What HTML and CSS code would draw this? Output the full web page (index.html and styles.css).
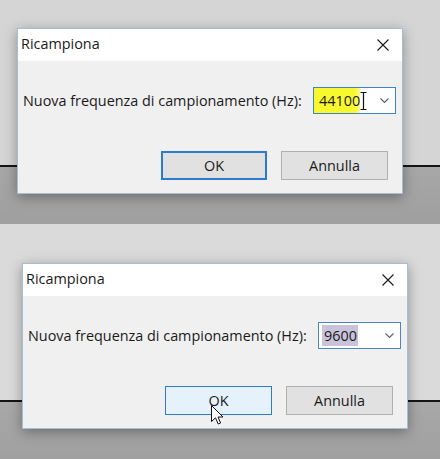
FILE: index.html
```html
<!DOCTYPE html>
<html lang="it">
<head>
<meta charset="utf-8">
<title>Ricampiona</title>
<link rel="stylesheet" href="styles.css">
</head>
<body>
<section class="panel panel-top">
  <div class="dialog">
    <div class="titlebar">
      <span class="title">Ricampiona</span>
      <svg class="close" width="12" height="12" viewBox="0 0 12 12"><path d="M0.5 0.5 L11.5 11.5 M11.5 0.5 L0.5 11.5" stroke="#1a1a1a" stroke-width="1.1" fill="none"/></svg>
    </div>
    <div class="content">
      <div class="row">
        <span class="label">Nuova frequenza di campionamento (Hz):</span>
        <div class="combo combo-focus">
          <span class="value hl-yellow">44100</span>
          <svg class="chev" width="9" height="5" viewBox="0 0 9 5"><path d="M0.5 0.5 L4.5 4.5 L8.5 0.5" stroke="#606060" stroke-width="1.1" fill="none"/></svg>
          <svg class="ibeam" width="7" height="18" viewBox="0 0 7 18"><path d="M0.5 0.5 H6.5 M3.5 0.5 V17.5 M0.5 17.5 H6.5" stroke="#111" stroke-width="1.2" fill="none"/></svg>
        </div>
      </div>
      <div class="buttons">
        <button class="btn btn-default">OK</button>
        <button class="btn">Annulla</button>
      </div>
    </div>
  </div>
</section>
<section class="panel panel-bottom">
  <div class="dialog">
    <div class="titlebar">
      <span class="title">Ricampiona</span>
      <svg class="close" width="12" height="12" viewBox="0 0 12 12"><path d="M0.5 0.5 L11.5 11.5 M11.5 0.5 L0.5 11.5" stroke="#1a1a1a" stroke-width="1.1" fill="none"/></svg>
    </div>
    <div class="content">
      <div class="row">
        <span class="label">Nuova frequenza di campionamento (Hz):</span>
        <div class="combo combo-plain">
          <span class="value hl-lilac">9600</span>
          <svg class="chev" width="9" height="5" viewBox="0 0 9 5"><path d="M0.5 0.5 L4.5 4.5 L8.5 0.5" stroke="#606060" stroke-width="1.1" fill="none"/></svg>
        </div>
      </div>
      <div class="buttons">
        <button class="btn btn-hover">OK
          <svg class="cursor" width="13" height="20" viewBox="0 0 13 20"><path d="M0.5 0.5 V16.5 L4.5 12.8 L7.2 19 L9.6 18 L7 12 H12 Z" fill="#fff" stroke="#111" stroke-width="1" stroke-linejoin="miter"/></svg>
        </button>
        <button class="btn">Annulla</button>
      </div>
    </div>
  </div>
</section>
</body>
</html>
```
FILE: styles.css
```css
* { box-sizing: border-box; }
html, body { margin: 0; padding: 0; }
body {
  width: 440px;
  height: 459px;
  overflow: hidden;
  background: #d8d8d8;
  font-family: "Open Sans", "Noto Sans", "DejaVu Sans", sans-serif;
  color: #1a1a1a;
}
.panel { display: block; }
.panel-top {
  height: 224px;
  padding: 28px 0 0 17px;
  background: linear-gradient(to bottom, #d5d5d5 0, #d5d5d5 165px, #141414 165px, #141414 167px, #a7a7a7 167px, #9f9f9f 224px);
}
.panel-bottom {
  height: 235px;
  padding: 39px 0 0 22px;
  background: linear-gradient(to bottom, #dadada 0, #dadada 176px, #141414 176px, #141414 178px, #a8a8a8 178px, #a0a0a0 235px);
}
.dialog {
  width: 386px;
  height: 166px;
  background: #f0f0f0;
  border: 1px solid #a8bcd4;
  box-shadow: 0 3px 12px rgba(0, 0, 0, 0.35);
  display: flex;
  flex-direction: column;
}
.titlebar {
  height: 32px;
  background: #fff;
  display: flex;
  align-items: center;
  justify-content: space-between;
  padding: 0 13px 0 3px;
}
.title { font-size: 14.4px; line-height: 1; padding-bottom: 1px; }
.close { display: block; }
.content { display: flex; flex-direction: column; }
.row {
  margin-top: 26px;
  height: 27px;
  display: flex;
  align-items: center;
  justify-content: space-between;
  padding: 0 6px 0 5px;
}
.label { font-size: 14.4px; }
.combo {
  position: relative;
  width: 83px;
  height: 27px;
  border: 1px solid #3c84cf;
  background: #fff;
  display: flex;
  align-items: center;
}
.combo-plain { border-color: #4a86c3; }
.value { font-size: 14.4px; line-height: 25px; }
.hl-yellow {
  background: linear-gradient(to right, #f8f82e 0, #f8f82e 40px, #fbfb8a 46px);
  width: 46px;
  height: 25px;
  padding-left: 5px;
}
.hl-lilac {
  background: #c9c3da;
  margin-left: 3px;
  height: 21px;
  line-height: 21px;
  padding: 0 2px 0 2px;
  width: 36px;
}
.chev { position: absolute; right: 6px; top: 10px; }
.ibeam { position: absolute; left: 46px; top: 4px; }
.buttons {
  margin-top: 37px;
  display: flex;
  justify-content: flex-end;
  gap: 14px;
  padding-right: 14px;
}
.btn {
  position: relative;
  width: 107px;
  height: 29px;
  font-family: inherit;
  font-size: 14.4px;
  color: #1a1a1a;
  background: #e1e1e1;
  border: 1px solid #b0b0b0;
  padding: 0;
}
.btn-default { border: 2px solid #2b7bd0; width: 106px; }
.btn-hover { background: #e5f1fb; border-color: #2c7bcc; }
.cursor { position: absolute; left: 45px; top: 18px; }
```
